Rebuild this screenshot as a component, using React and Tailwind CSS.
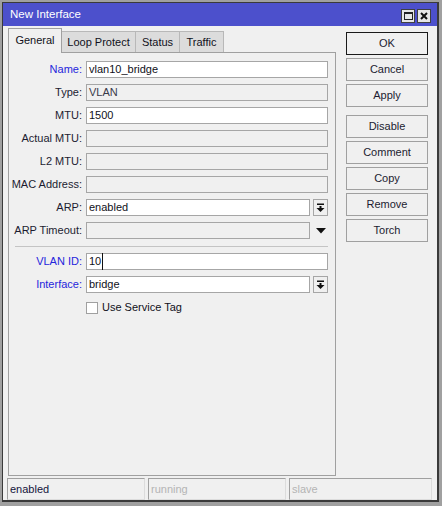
const font = { fontFamily: '"Liberation Sans", Arial, sans-serif' };

const DropIcon = () => (
  <svg width="9" height="9" viewBox="0 0 9 9">
    <rect x="1" y="0.5" width="7" height="1.5" fill="#111" />
    <rect x="3.5" y="3" width="2" height="2" fill="#111" />
    <path d="M0.5 5 L8.5 5 L4.5 9 Z" fill="#111" />
  </svg>
);

const Field = ({ label, value, blue, disabled, drop, arrow }) => (
  <div className="flex items-center h-[17px]">
    <div className={`w-[73px] text-right text-[11px] leading-none ${blue ? 'text-[#2525dc]' : 'text-[#1c1c30]'}`}>
      {label}:
    </div>
    <div className="ml-[4px] flex-1 flex items-center h-full">
      <div
        className={`flex-1 h-full border border-[#a6a6a6] flex items-center pl-[2px] text-[11px] ${
          disabled ? 'bg-[#f0f0f0] text-[#3a3a4a]' : 'bg-white text-[#101020]'
        }`}
      >
        {value}
      </div>
      {drop && (
        <div className="ml-[3px] w-[15px] h-full border border-[#a6a6a6] bg-[#f0f0f0] flex items-center justify-center">
          <DropIcon />
        </div>
      )}
      {arrow && (
        <div className="ml-[3px] w-[15px] h-full flex items-center justify-center">
          <svg width="10" height="6" viewBox="0 0 10 6">
            <path d="M0 0 L10 0 L5 5.5 Z" fill="#111" />
          </svg>
        </div>
      )}
    </div>
  </div>
);

const Btn = ({ children, primary }) => (
  <div
    className={`h-[23px] border flex items-center justify-center text-[11px] text-[#1c1c30] bg-[#f0f0f0] ${
      primary ? 'border-[#1a1a1a]' : 'border-[#a0a0a0]'
    }`}
  >
    {children}
  </div>
);

export default function App() {
  return (
    <div className="w-[442px] h-[506px] bg-[#a0a0a0] pt-[2px] pl-[2px]" style={font}>
      <div className="w-[437px] h-[500px] border border-[#3a3a3a] border-r-2 border-b-2 bg-[#f0f0f0] flex flex-col">
        {/* Title bar */}
        <div className="h-[23px] bg-[#4c50cc] flex items-center pl-[7px] pr-[6px]">
          <span className="text-white text-[11.5px] flex-1">New Interface</span>
          <div className="flex gap-[2px] mt-[2px]">
            <div className="w-[14px] h-[14px] bg-[#e6e6e6] border border-[#404040] flex items-center justify-center">
              <div className="w-[9px] h-[8px] border border-[#222] border-t-2" />
            </div>
            <div className="w-[14px] h-[14px] bg-[#e6e6e6] border border-[#404040] flex items-center justify-center">
              <svg width="8" height="8" viewBox="0 0 8 8">
                <path d="M1 1 L7 7 M7 1 L1 7" stroke="#111" strokeWidth="2" />
              </svg>
            </div>
          </div>
        </div>

        {/* Main */}
        <div className="flex">
          <div className="ml-[5px] w-[328px] pt-[2px] flex flex-col">
            <div className="flex items-end h-[24px]">
              <div className="relative z-10 w-[54px] h-[25px] -mb-px bg-[#f0f0f0] border border-b-0 border-[#a0a0a0] flex items-center justify-center text-[11px] text-[#101020] pb-[2px]">
                General
              </div>
              <div className="w-[74px] h-[21px] bg-[#dcdcdc] border border-l-0 border-b-0 border-[#b8b8b8] flex items-center justify-center text-[11px] text-[#101020]">
                Loop Protect
              </div>
              <div className="w-[44px] h-[21px] bg-[#dcdcdc] border border-l-0 border-b-0 border-[#b8b8b8] flex items-center justify-center text-[11px] text-[#101020]">
                Status
              </div>
              <div className="w-[44px] h-[21px] bg-[#dcdcdc] border border-l-0 border-b-0 border-[#b8b8b8] flex items-center justify-center text-[11px] text-[#101020]">
                Traffic
              </div>
            </div>
            <div className="h-[424px] border border-[#a0a0a0] pt-[8px] pr-[7px] flex flex-col gap-[6px]">
              <Field label="Name" value="vlan10_bridge" blue />
              <Field label="Type" value="VLAN" disabled />
              <Field label="MTU" value="1500" />
              <Field label="Actual MTU" disabled />
              <Field label="L2 MTU" disabled />
              <Field label="MAC Address" disabled />
              <Field label="ARP" value="enabled" drop />
              <Field label="ARP Timeout" disabled arrow />
              <div className="h-[2px] ml-[6px] border-b border-[#c4c4c4]" />
              <Field label="VLAN ID" value={<span className="border-r border-[#111] pr-px">10</span>} blue />
              <Field label="Interface" value="bridge" blue drop />
              <div className="flex items-center h-[17px] pl-[77px]">
                <div className="w-[12px] h-[12px] bg-white border border-[#a0a0a0]" />
                <span className="ml-[4px] text-[11px] text-[#101020]">Use Service Tag</span>
              </div>
            </div>
          </div>

          <div className="ml-[10px] w-[82px] pt-[6px] flex flex-col gap-[3px]">
            <Btn primary>OK</Btn>
            <Btn>Cancel</Btn>
            <Btn>Apply</Btn>
            <div className="h-[2px]" />
            <Btn>Disable</Btn>
            <Btn>Comment</Btn>
            <Btn>Copy</Btn>
            <Btn>Remove</Btn>
            <Btn>Torch</Btn>
          </div>
        </div>

        {/* Status bar */}
        <div className="flex gap-[3px] pl-[4px] mt-[2px]">
          <div className="w-[138px] h-[22px] border border-[#a0a0a0] border-r-[#dcdcdc] border-b-[#dcdcdc] flex items-center pl-[2px] text-[11px] text-[#14143c]">
            enabled
          </div>
          <div className="w-[138px] h-[22px] border border-[#a0a0a0] border-r-[#dcdcdc] border-b-[#dcdcdc] flex items-center pl-[2px] text-[11px] text-[#b4b4b4]">
            running
          </div>
          <div className="w-[143px] h-[22px] border border-[#a0a0a0] border-r-[#dcdcdc] border-b-[#dcdcdc] flex items-center pl-[2px] text-[11px] text-[#b4b4b4]">
            slave
          </div>
        </div>
      </div>
    </div>
  );
}
